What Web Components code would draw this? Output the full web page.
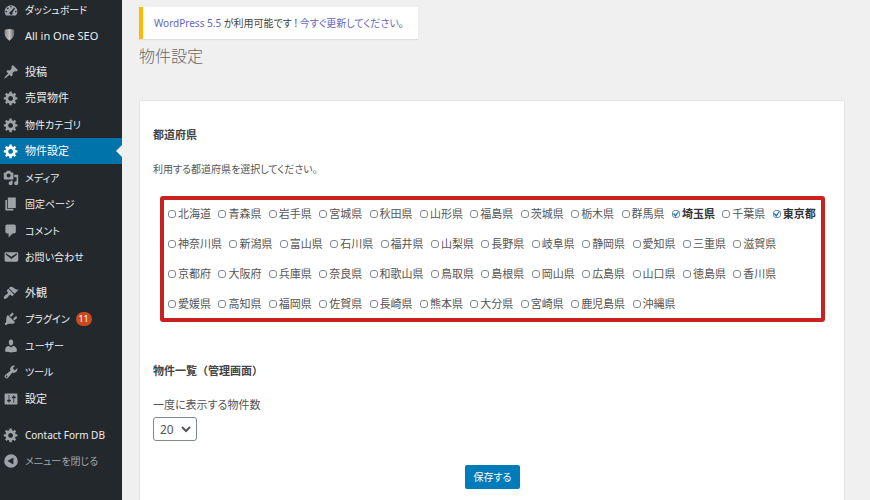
<!DOCTYPE html>
<html lang="ja">
<head>
<meta charset="utf-8">
<title>物件設定</title>
<style>
html,body{margin:0;min-height:100%}
body{background:#f0f0f0;font:11px/16px "Noto Sans","Noto Sans CJK JP",sans-serif;color:#444}
</style>
</head>
<body>
<admin-page></admin-page>
<script>
const define = (name, html, setup) => customElements.define(name, class extends HTMLElement {
  connectedCallback() {
    if (this.shadowRoot) return;
    const t = document.createElement('template');
    t.innerHTML = html;
    this.attachShadow({mode: 'open'}).append(t.content.cloneNode(true));
    if (setup) setup(this, this.shadowRoot);
  }
});

const ICONS = {
  dashboard: '<path fill-rule="evenodd" d="M3.8 17h12.4c1.1-1.4 1.8-3.1 1.8-5a8 8 0 1 0-16 0c0 1.9.7 3.6 1.8 5zM9 6a1 1 0 1 0 2 0 1 1 0 1 0-2 0zM5 8a1 1 0 1 0 2 0 1 1 0 1 0-2 0zM3 12a1 1 0 1 0 2 0 1 1 0 1 0-2 0zM15 12a1 1 0 1 0 2 0 1 1 0 1 0-2 0zM14.6 7.4c.4.3.4.8.2 1.1l-3.1 4.6c.2.3.3.6.3.9a2 2 0 1 1-2.3-2l3.9-4.5c.3-.3.7-.4 1-.1z"/>',
  shield: '<defs><linearGradient id="g" x2="1"><stop stop-color="#888"/><stop offset=".5" stop-color="#c4c4c4"/><stop offset="1" stop-color="#666"/></linearGradient></defs><path fill="url(#g)" d="M2 2.500Q8 0 14 2.500V7c0 4-3 7-6 9-3-2-6-5-6-9z"/>',
  post: '<path d="M10.44 3.02l1.82-1.82 6.36 6.35-1.83 1.82c-1.05-.68-2.48-.57-3.41.36l-.75.75c-.92.93-1.04 2.35-.35 3.41l-1.83 1.82-2.41-2.41-2.8 2.79c-.42.42-3.38 2.71-3.8 2.29s1.86-3.39 2.28-3.81l2.79-2.79L4.1 9.36l1.83-1.82c1.05.69 2.48.57 3.4-.36l.75-.75c.93-.92 1.05-2.35.36-3.41z"/>',
  gear: '<path d="M18 12h-2.18c-.17.7-.44 1.35-.81 1.93l1.54 1.54-2.1 2.1-1.54-1.54c-.58.36-1.23.63-1.91.79V19H8v-2.18c-.68-.16-1.33-.43-1.91-.79l-1.54 1.54-2.12-2.12 1.54-1.54c-.36-.58-.63-1.23-.79-1.91H1V9.03h2.17c.16-.7.44-1.35.8-1.94L2.43 5.55l2.1-2.1 1.54 1.54c.58-.37 1.24-.64 1.93-.81V2h3v2.18c.68.16 1.33.43 1.91.79l1.54-1.54 2.12 2.12-1.54 1.54c.36.59.64 1.24.8 1.94H18V12zm-8.5 1.5c1.66 0 3-1.34 3-3s-1.34-3-3-3-3 1.34-3 3 1.34 3 3 3z"/>',
  media: '<path d="M13 11V4c0-.55-.45-1-1-1h-1.67L9 1H5L3.67 3H2c-.55 0-1 .45-1 1v7c0 .55.45 1 1 1h10c.55 0 1-.45 1-1zM7 4.5c1.38 0 2.5 1.12 2.5 2.5S8.38 9.5 7 9.5 4.5 8.38 4.5 7 5.62 4.5 7 4.5zM14 6h5v10.500c0 1.38-1.12 2.5-2.5 2.5S14 17.88 14 16.5s1.12-2.5 2.5-2.5c.17 0 .34.02.5.05V9h-3V6zm-4 8.05V13h2v3.5c0 1.38-1.12 2.5-2.5 2.5S7 17.88 7 16.5 8.12 14 9.5 14c.17 0 .34.02.5.05z"/>',
  page: '<path d="M6 15V2h10v13H6zm-1 1h8v2H3V5h2v11z"/>',
  comment: '<path d="M5 2h9c1.1 0 2 .9 2 2v7c0 1.1-.9 2-2 2h-2l-5 5v-5H5c-1.1 0-2-.9-2-2V4c0-1.1.9-2 2-2z"/>',
  mail: '<path d="M3.87 4h13.25C18.37 4 19 4.59 19 5.79v8.42c0 1.19-.63 1.79-1.88 1.79H3.87c-1.25 0-1.88-.6-1.88-1.79V5.79c0-1.2.63-1.79 1.88-1.79zm6.62 8.6l6.74-5.53c.24-.2.43-.66.13-1.07-.29-.41-.82-.42-1.17-.17l-5.7 3.86L4.8 5.83c-.35-.25-.88-.24-1.17.17-.3.41-.11.87.13 1.07z"/>',
  brush: '<path d="M14.48 11.06L7.41 3.99l1.5-1.5c.5-.56 2.3-.47 3.51.32 1.21.8 1.43 1.28 2.91 2.1 1.18.64 2.45 1.26 4.45.85zm-.71.71L6.7 4.7 4.93 6.47c-.39.39-.39 1.02 0 1.41l1.06 1.06c.39.39.39 1.03 0 1.42-.6.6-1.43 1.11-2.21 1.69-.35.26-.7.53-1.01.84C1.43 14.23.4 16.08 1.4 17.07c.99 1 2.84-.03 4.18-1.36.31-.31.58-.66.85-1.02.57-.78 1.08-1.61 1.69-2.21.39-.39 1.02-.39 1.41 0l1.06 1.06c.39.39 1.02.39 1.41 0z"/>',
  plug: '<path d="M13.11 4.36L9.87 7.6 8 5.73l3.24-3.24c.35-.34 1.05-.2 1.56.32.52.51.66 1.21.31 1.55zm-8 1.77l.91-1.12 9.01 9.01-1.19.84c-.71.71-2.63 1.16-3.82 1.16H6.14L4.9 17.26c-.59.59-1.54.59-2.12 0-.59-.58-.59-1.53 0-2.12l1.24-1.24v-3.88c0-1.13.4-3.19 1.09-3.89zm7.26 3.97l3.24-3.24c.34-.35 1.04-.21 1.55.31.52.51.66 1.21.31 1.55l-3.24 3.25z"/>',
  user: '<path d="M10 9.25c-2.27 0-2.73-3.44-2.73-3.44C7 4.02 7.82 2 9.97 2c2.16 0 2.98 2.02 2.71 3.81 0 0-.41 3.44-2.68 3.44zm0 2.57L12.72 10c2.39 0 4.52 2.33 4.52 4.53v2.49s-3.65 1.13-7.24 1.13c-3.65 0-7.24-1.13-7.24-1.13v-2.49c0-2.25 1.94-4.48 4.47-4.48z"/>',
  wrench: '<path d="M16.68 9.77c-1.34 1.34-3.3 1.67-4.95.99l-5.41 6.52c-.99.99-2.59.99-3.58 0s-.99-2.59 0-3.57l6.52-5.42c-.68-1.65-.35-3.61.99-4.95 1.28-1.28 3.12-1.62 4.72-1.06l-2.89 2.89 2.82 2.82 2.86-2.87c.53 1.58.18 3.39-1.08 4.65zM3.81 16.21c.4.39 1.04.39 1.43 0 .4-.4.4-1.04 0-1.43-.39-.4-1.03-.4-1.43 0-.39.39-.39 1.03 0 1.43z"/>',
  sliders: '<path d="M18 16V4c0-.55-.45-1-1-1H3c-.55 0-1 .45-1 1v12c0 .55.45 1 1 1h14c.55 0 1-.45 1-1zM8 11h1c.55 0 1 .45 1 1s-.45 1-1 1H8v1.5c0 .28-.22.5-.5.5s-.5-.22-.5-.5V13H6c-.55 0-1-.45-1-1s.45-1 1-1h1V5.5c0-.28.22-.5.5-.5s.5.22.5.5V11zm5-2h-1c-.55 0-1-.45-1-1s.45-1 1-1h1V5.5c0-.28.22-.5.5-.5s.5.22.5.5V7h1c.55 0 1 .45 1 1s-.45 1-1 1h-1v5.5c0 .28-.22.5-.5.5s-.5-.22-.5-.5V9z"/>',
  collapse: '<path fill-rule="evenodd" d="M10 1.5a8.5 8.5 0 1 0 0 17 8.5 8.5 0 1 0 0-17zM13 5.500v9L5.500 10z"/>'
};

define('admin-icon', `<style>
:host{display:block;width:16px;height:16px;flex:none}
svg{display:block;width:100%;height:100%;fill:currentColor}
</style><svg viewBox="0 0 20 20" aria-hidden="true"></svg>`,
(el, root) => { root.querySelector('svg').innerHTML = ICONS[el.getAttribute('name')]; });

define('menu-item', `<style>
:host{display:block;height:26px;color:#9ea3a8}
:host(:nth-child(odd)){height:27px}
:host([compact]){font-size:10px}
a,button{box-sizing:border-box;position:relative;width:100%;height:100%;display:flex;align-items:center;gap:6px;padding:0 0 0 3px;border:0;background:none;color:inherit;font:inherit;font-feature-settings:inherit;text-decoration:none;white-space:nowrap;text-align:left}
.text{color:#eee}
button .text{color:#a0a5aa}
:host([current]) a{background:#0073aa;color:#fff}
:host([current]) .text{color:#fff}
:host([current]) a::after{content:"";position:absolute;right:0;top:50%;margin-top:-6px;border:6px solid transparent;border-left-width:0;border-right-color:#f0f0f0}
</style><slot hidden></slot>`,
(el, root) => {
  const box = document.createElement(el.hasAttribute('action') ? 'button' : 'a');
  if (box.localName === 'a') box.href = '#'; else box.type = 'button';
  box.innerHTML = `<admin-icon name="${el.getAttribute('icon')}"></admin-icon><span class="text"><slot></slot></span><slot name="badge"></slot>`;
  root.querySelector('slot').replaceWith(box);
});

define('count-badge', `<style>
:host{display:block;min-width:16px;height:14px;line-height:14px;border-radius:7px;background:#ca4a1f;color:#fff;font-size:9px;text-align:center}
</style><slot></slot>`);

define('menu-group', `<style>:host{display:block;margin-bottom:9px}</style><slot></slot>`);

define('admin-menu', `<style>
:host{display:block;background:#23282d;width:122px;flex:none;font-feature-settings:"palt";overflow:hidden}
nav{margin-top:-4px}
</style><nav>
<menu-group><menu-item icon="dashboard" compact>ダッシュボード</menu-item><menu-item icon="shield">All in One SEO</menu-item></menu-group>
<menu-group><menu-item icon="post">投稿</menu-item><menu-item icon="gear">売買物件</menu-item><menu-item icon="gear" compact>物件カテゴリ</menu-item><menu-item icon="gear" current>物件設定</menu-item><menu-item icon="media" compact>メディア</menu-item><menu-item icon="page" compact>固定ページ</menu-item><menu-item icon="comment" compact>コメント</menu-item><menu-item icon="mail" compact>お問い合わせ</menu-item></menu-group>
<menu-group><menu-item icon="brush">外観</menu-item><menu-item icon="plug" compact>プラグイン<count-badge slot="badge">11</count-badge></menu-item><menu-item icon="user" compact>ユーザー</menu-item><menu-item icon="wrench" compact>ツール</menu-item><menu-item icon="sliders">設定</menu-item></menu-group>
<menu-group><menu-item icon="gear" compact>Contact Form DB</menu-item><menu-item icon="collapse" action compact>メニューを閉じる</menu-item></menu-group>
</nav>`);

define('update-notice', `<style>
:host{display:block;box-sizing:border-box;width:fit-content;padding:8px 14px 8px 11px;background:#fff;border-left:4px solid #ffb900;box-shadow:0 1px 1px rgba(0,0,0,.08);font-size:10px;font-feature-settings:"palt"}
a{color:#6466c4;text-decoration:none}
</style><a href="#">WordPress 5.5</a> が利用可能です ! <a href="#">今すぐ更新してください</a>。`);

define('pref-check', `<style>
:host{display:inline-block;vertical-align:top;margin-right:4px;font-size:11px;line-height:30px;white-space:nowrap;color:#555}
:host([checked]){font-weight:700;color:#333}
label{display:flex;align-items:center;gap:2px}
input{appearance:none;box-sizing:border-box;width:8px;height:8px;margin:0;border:1px solid #7e8993;border-radius:3px;background:#fff;display:grid}
input:checked::before{content:"";width:6px;height:6px;background:#007cba;clip-path:polygon(0 50%,20% 35%,42% 62%,90% 0,100% 12%,45% 100%)}
</style><label><input type="checkbox"><span><slot></slot></span></label>`,
(el, root) => { root.querySelector('input').checked = el.hasAttribute('checked'); });

define('pref-list', `<style>
:host{display:flow-root;border:4px solid #c9211e;border-radius:3px;padding:0 0 0 4px;font-size:13px;line-height:30px}
div{margin:-1px 0}
</style><div></div>`,
(el, root) => {
  const names = '北海道 青森県 岩手県 宮城県 秋田県 山形県 福島県 茨城県 栃木県 群馬県 埼玉県 千葉県 東京都 神奈川県 新潟県 富山県 石川県 福井県 山梨県 長野県 岐阜県 静岡県 愛知県 三重県 滋賀県 京都府 大阪府 兵庫県 奈良県 和歌山県 鳥取県 島根県 岡山県 広島県 山口県 徳島県 香川県 愛媛県 高知県 福岡県 佐賀県 長崎県 熊本県 大分県 宮崎県 鹿児島県 沖縄県'.split(' ');
  const on = ['埼玉県', '東京都'];
  root.querySelector('div').innerHTML = names.map(n => `<pref-check${on.includes(n) ? ' checked' : ''}>${n}</pref-check>`).join(' ');
});

define('count-select', `<style>
:host{display:block}
label{display:block;margin-bottom:4px;font-feature-settings:"palt"}
.box{display:grid;width:fit-content;align-items:center}
select,svg{grid-area:1/1}
select{appearance:none;height:24px;padding:0 22px 0 6px;border:1px solid #7e8993;border-radius:3px;background:#fff;color:#555;font:12px "Noto Sans",sans-serif}
svg{width:10px;height:10px;justify-self:end;margin-right:6px;pointer-events:none;fill:none;stroke:#555;stroke-width:2}
</style><label for="n">一度に表示する物件数</label><div class="box"><select id="n"><option>20</option></select><svg viewBox="0 0 10 10"><path d="M1 3l4 4 4-4"/></svg></div>`);

define('settings-card', `<style>
:host{display:block;background:#fff;border:1px solid #e5e5e5;border-bottom:0;padding:26px 12px 11px 13px;color:#555}
h2{margin:0;font-size:11px;line-height:16px;font-weight:700;color:#444}
p{margin:18px 0 19px;font-size:10px;font-feature-settings:"palt"}
pref-list{margin:0 7px 41px}
count-select{margin-top:18px}
button{display:block;margin:24px auto 0;height:24px;padding:0 8px;border:0;border-radius:2px;background:#007cba;color:#fff;font:inherit;font-size:10px;font-feature-settings:"palt"}
</style>
<h2>都道府県</h2>
<p>利用する都道府県を選択してください。</p>
<pref-list></pref-list>
<h2>物件一覧（管理画面）</h2>
<count-select></count-select>
<button type="button">保存する</button>`);

define('admin-page', `<style>
:host{display:flex;min-height:100vh}
main{flex:1;min-width:0;padding:7px 25px 0 17px}
h1{margin:5px 0 32px;font-size:16px;line-height:24px;font-weight:300;color:#666}
</style><admin-menu></admin-menu>
<main><update-notice></update-notice><h1>物件設定</h1><settings-card></settings-card></main>`);
</script>
</body>
</html>
